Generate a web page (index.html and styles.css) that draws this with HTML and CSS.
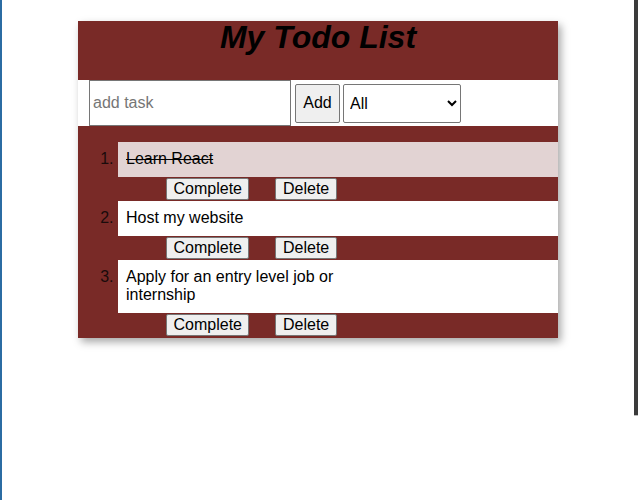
FILE: index.html
```html
<!DOCTYPE html>
<html>
<head>
<meta charset="utf-8">
<title>My Todo List</title>
<link rel="stylesheet" href="styles.css">
</head>
<body>
<div class="frame">
  <div class="edge-left"></div>
  <main class="main">
    <div class="card">
      <header class="header"><h1 class="title">My Todo List</h1></header>
      <form class="form">
        <input class="task-input" type="text" placeholder="add task">
        <button class="btn add-btn" type="button">Add</button>
        <select class="filter">
          <option>All</option>
          <option>Completed</option>
          <option>Uncompleted</option>
        </select>
      </form>
      <ol class="list">
        <li class="item">
          <div class="text done"><div class="label">Learn React</div></div>
          <div class="actions"><button class="btn" type="button">Complete</button><button class="btn" type="button">Delete</button></div>
        </li>
        <li class="item">
          <div class="text"><div class="label">Host my website</div></div>
          <div class="actions"><button class="btn" type="button">Complete</button><button class="btn" type="button">Delete</button></div>
        </li>
        <li class="item">
          <div class="text"><div class="label">Apply for an entry level job or internship</div></div>
          <div class="actions"><button class="btn" type="button">Complete</button><button class="btn" type="button">Delete</button></div>
        </li>
      </ol>
    </div>
  </main>
  <div class="edge-right"></div>
</div>
</body>
</html>
```

FILE: styles.css
```css
html, body {
  margin: 0;
  padding: 0;
  background: #ffffff;
}
body {
  font-family: "Liberation Sans", Arial, sans-serif;
  font-size: 16px;
}
.frame {
  display: flex;
  align-items: flex-start;
  min-height: 500px;
}
.edge-left {
  width: 2px;
  align-self: stretch;
  background: #2b6ca3;
}
.edge-right {
  width: 4px;
  height: 415px;
  background: #3b3b3b;
  border-bottom: 1px solid #bdbdbd;
}
.main {
  flex: 1;
}
.card {
  width: 480px;
  margin: 21px auto 0;
  background: #792a27;
  box-shadow: 3px 4px 8px rgba(0, 0, 0, 0.35);
}
.header {
  padding: 0 0 27px;
  text-align: center;
}
.title {
  margin: 0;
  font-size: 32px;
  line-height: 32px;
  font-weight: bold;
  font-style: italic;
  color: #000;
}
.form {
  margin: 0;
  display: flex;
  align-items: center;
  gap: 3px;
  background: #ffffff;
  padding-left: 11px;
  height: 46px;
}
.task-input {
  box-sizing: border-box;
  width: 202px;
  height: 46px;
  margin: 0 1px 0 0;
  border: 1px solid #767676;
  padding: 0 3px;
  font-family: "Liberation Sans", Arial, sans-serif;
  font-size: 16px;
  color: #000;
  outline: none;
}
.task-input::placeholder {
  color: #767676;
}
.btn {
  box-sizing: border-box;
  font-family: "Liberation Sans", Arial, sans-serif;
  font-size: 16px;
  line-height: 18px;
  color: #000;
  background: #efefef;
  border: 1px solid #767676;
  border-radius: 2px;
  padding: 1px 6.5px;
  margin: 0;
}
.add-btn {
  height: 39px;
  width: 45px;
  padding: 0;
}
.filter {
  box-sizing: border-box;
  width: 118px;
  height: 39px;
  font-family: "Liberation Sans", Arial, sans-serif;
  font-size: 16px;
  color: #000;
  background: #fff;
  border: 1px solid #767676;
  border-radius: 2px;
  padding: 0 0 0 2px;
}
.list {
  margin: 16px 0 0;
  padding: 0 0 1px 40px;
}
.item {
  color: #1a0b0b;
  font-size: 16px;
  line-height: 18px;
}
.text {
  background: #ffffff;
  padding: 8px 8px 9px;
  color: #000;
}
.text.done {
  background: #e2d3d3;
}
.text.done .label {
  text-decoration: line-through;
}
.label {
  max-width: 240px;
}
.actions {
  display: flex;
  gap: 26px;
  padding: 1px 0 1px 48px;
}
```
